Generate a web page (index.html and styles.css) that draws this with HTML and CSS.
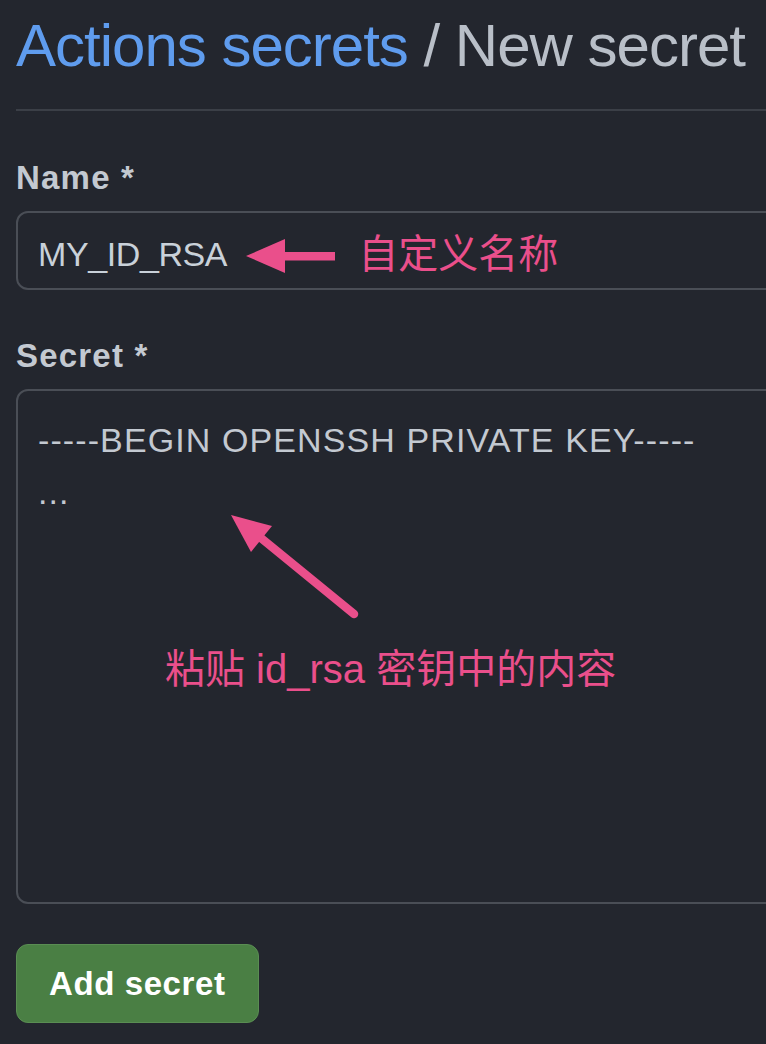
FILE: index.html
```html
<!DOCTYPE html>
<html lang="zh-CN">
<head>
<meta charset="utf-8">
<title>Actions secrets / New secret</title>
<link rel="stylesheet" href="styles.css">
</head>
<body>
<main class="page">
  <h1 class="subhead"><a class="crumb" href="#">Actions secrets</a><span class="sep"> / </span><span class="current">New secret</span></h1>
  <form class="form">
    <div class="group">
      <label class="label">Name *</label>
      <div class="input">
        <span class="value">MY_ID_RSA</span>
        <svg class="arrow-left" width="90" height="34" viewBox="0 0 90 34" aria-hidden="true">
          <polygon points="0,17 39,0 39,34" fill="#ea4f8b"/>
          <rect x="37" y="13" width="52" height="8.5" fill="#ea4f8b"/>
        </svg>
        <span class="note">自定义名称</span>
      </div>
    </div>
    <div class="group">
      <label class="label">Secret *</label>
      <div class="textarea">
        <div class="line">-----BEGIN OPENSSH PRIVATE KEY-----</div>
        <div class="line">...</div>
        <svg class="arrow-diag" width="170" height="130" viewBox="0 0 170 130" aria-hidden="true">
          <line x1="48" y1="33" x2="146" y2="113" stroke="#ea4f8b" stroke-width="8.5" stroke-linecap="round"/>
          <polygon points="23,14 64,25 43,51" fill="#ea4f8b"/>
        </svg>
        <span class="note note-secret">粘贴 id_rsa 密钥中的内容</span>
      </div>
    </div>
    <button class="btn" type="button">Add secret</button>
  </form>
</main>
</body>
</html>
```
FILE: styles.css
```css
html, body {
  margin: 0;
  padding: 0;
  background: #23262e;
  overflow: hidden;
}

body {
  font-family: "Liberation Sans", Arial, "Noto Sans CJK SC", sans-serif;
  color: #c9d1d9;
}

.page {
  padding: 10px 0 0 16px;
}

.subhead {
  margin: 0;
  font-size: 60px;
  line-height: 72px;
  font-weight: 400;
  letter-spacing: -1px;
  padding-bottom: 27px;
  border-bottom: 2px solid #3b3f47;
  white-space: nowrap;
}

.crumb {
  color: #5f9cee;
  text-decoration: none;
}

.sep, .current {
  color: #b9bfc8;
}

.form {
  display: flex;
  flex-direction: column;
  align-items: flex-start;
  padding-top: 47px;
}

.group {
  width: calc(100% + 24px);
  display: flex;
  flex-direction: column;
  gap: 13px;
  margin-bottom: 46px;
}

.group + .btn {
  margin-top: -6px;
}

.label {
  font-size: 33px;
  line-height: 40px;
  font-weight: 700;
  letter-spacing: 1.2px;
  color: #c3c9d1;
}

.input {
  box-sizing: border-box;
  height: 79px;
  border: 2px solid #4a4e56;
  border-radius: 12px;
  display: flex;
  align-items: center;
  padding: 6px 0 0 20px;
}

.value {
  font-size: 34px;
  line-height: 40px;
  letter-spacing: -0.4px;
  color: #c9d1d9;
}

.arrow-left {
  flex: none;
  margin: 4px 0 0 19px;
}

.note {
  font-family: "Liberation Sans", "Noto Sans CJK SC", sans-serif;
  font-size: 40px;
  line-height: 44px;
  color: #ea4f8b;
  white-space: nowrap;
}

.input .note {
  margin-left: 22px;
}

.textarea {
  position: relative;
  box-sizing: border-box;
  height: 515px;
  border: 2px solid #4a4e56;
  border-radius: 12px;
  padding: 23px 0 0 20px;
}

.line {
  font-size: 34px;
  line-height: 52px;
  letter-spacing: 1.1px;
  color: #c3c9d1;
  white-space: nowrap;
}

.arrow-diag {
  position: absolute;
  left: 190px;
  top: 110px;
}

.note-secret {
  position: absolute;
  left: 147px;
  top: 256px;
}

.btn {
  box-sizing: border-box;
  height: 79px;
  padding: 0 32px;
  border: 1px solid #5a8d53;
  border-radius: 12px;
  background: #4a7f44;
  color: #ffffff;
  font-family: "Liberation Sans", Arial, sans-serif;
  font-size: 33px;
  font-weight: 700;
  letter-spacing: 0.6px;
  cursor: pointer;
}
```
